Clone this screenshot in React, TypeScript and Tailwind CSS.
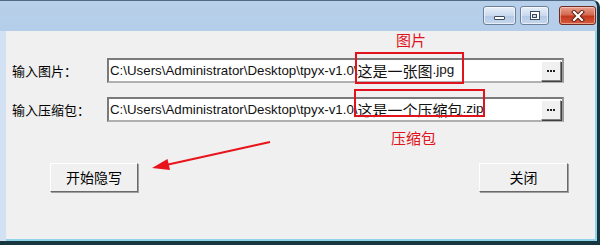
import React from "react";

const latin = { fontFamily: '"Liberation Sans", Arial, sans-serif' };
const cjk = { fontFamily: '"Noto Sans CJK SC", "Liberation Sans", sans-serif' };

function DotsButton() {
  return (
    <div className="mr-[1px] flex h-[20px] w-[20px] items-center justify-center gap-[1px] border border-t-white border-l-white border-r-[#808080] border-b-[#808080] bg-[#f0f0f0] shadow-[1px_1px_0_#404040]">
      <span className="h-[2px] w-[2px] bg-[#202020]" />
      <span className="h-[2px] w-[2px] bg-[#202020]" />
      <span className="h-[2px] w-[2px] bg-[#202020]" />
    </div>
  );
}

function Field({ prefix, name, ext }: { prefix: string; name: string; ext: string }) {
  return (
    <div className="flex h-[25px] w-[457px] items-center justify-between border-2 border-t-[#7a7a7a] border-l-[#7a7a7a] border-r-[#9a9a9a] border-b-[#b0b0b0] bg-white">
      <div className="flex items-center whitespace-nowrap pl-[1px] text-[#111]">
        <span className="text-[13.3px]" style={latin}>{prefix}</span>
        <span className="text-[15px] leading-[18px]" style={cjk}>{name}</span>
        <span className="text-[13.5px]" style={latin}>{ext}</span>
      </div>
      <DotsButton />
    </div>
  );
}

function ClassicButton({ label, w }: { label: string; w: string }) {
  return (
    <div
      className={`${w} flex h-[29px] items-center justify-center border border-t-white border-l-white border-r-[#6a6a6a] border-b-[#6a6a6a] bg-[#f0f0f0] text-[14px] text-black shadow-[1px_1px_0_#a0a0a0]`}
      style={cjk}
    >
      {label}
    </div>
  );
}

export default function App() {
  return (
    <div className="relative h-[245px] w-[600px] overflow-hidden bg-white">
      <div className="flex h-full flex-col overflow-hidden rounded-tr-[7px] border-t border-r-[3px] border-b-[4px] border-t-[#4f6b88] border-r-[#17363f] border-b-[#17363f] bg-[linear-gradient(to_bottom,#b8d0ea,#a2c1e3_60%,#a9c7e6_85%,#c6daef)]">
        {/* title bar */}
        <div className="flex h-[30px] shrink-0 items-start justify-end pr-[1px] pt-[5px]">
          <div className="flex h-[19px] w-[33px] items-center justify-center rounded-[3px] border border-[#6d809a] bg-[linear-gradient(to_bottom,#e9f0f9,#c9d9ee_50%,#b2c8e4_51%,#c6d8ee)] shadow-[inset_0_0_0_1px_rgba(255,255,255,0.6)]">
            <div className="mt-[5px] h-[4px] w-[11px] rounded-[1px] border border-[#3b4a5e] bg-white" />
          </div>
          <div className="ml-[4px] flex h-[19px] w-[29px] items-center justify-center rounded-[3px] border border-[#6d809a] bg-[linear-gradient(to_bottom,#e9f0f9,#c9d9ee_50%,#b2c8e4_51%,#c6d8ee)] shadow-[inset_0_0_0_1px_rgba(255,255,255,0.6)]">
            <div className="flex h-[9px] w-[10px] items-center justify-center border border-[#3b4a5e] bg-white">
              <div className="h-[4px] w-[5px] border border-[#3b4a5e] bg-[#c9d9ee]" />
            </div>
          </div>
          <div className="ml-[10px] flex h-[19px] w-[37px] items-center justify-center rounded-[3px] border border-[#6e2a20] bg-[linear-gradient(to_bottom,#e8a08f,#d56a52_45%,#c2381d_55%,#d65c3c)] shadow-[inset_0_0_0_1px_rgba(255,230,220,0.5)]">
            <svg width="14" height="12" viewBox="0 0 14 12">
              <path d="M3 2 L11 10 M11 2 L3 10" stroke="#5a1a10" strokeWidth="4" strokeLinecap="square" />
              <path d="M3 2 L11 10 M11 2 L3 10" stroke="#ffffff" strokeWidth="2.2" strokeLinecap="square" />
            </svg>
          </div>
        </div>
        {/* frame + client */}
        <div className="flex flex-1 bg-[#d3e2f3] pl-[6px]">
          <div className="flex flex-1 flex-col border-r-2 border-b-2 border-r-[#8fd3e8] border-b-[#8fd3e8] bg-[#f0f0f0] pt-[27px]" style={cjk}>
            <div className="flex h-[25px] items-center pl-[6px]">
              <span className="w-[95px] text-[13px] text-black">输入图片：</span>
              <Field prefix="C:\Users\Administrator\Desktop\tpyx-v1.0\" name="这是一张图" ext=".jpg" />
            </div>
            <div className="mt-[14px] flex h-[25px] items-center pl-[6px]">
              <span className="w-[95px] text-[13px] text-black">输入压缩包：</span>
              <Field prefix="C:\Users\Administrator\Desktop\tpyx-v1.0\" name="这是一个压缩包" ext=".zip" />
            </div>
            <div className="mt-[41px] flex justify-between pl-[44px] pr-[27px]">
              <ClassicButton label="开始隐写" w="w-[88px]" />
              <ClassicButton label="关闭" w="w-[89px]" />
            </div>
          </div>
        </div>
      </div>

      {/* annotations */}
      <div className="absolute left-[355px] top-[52px] h-[32px] w-[109px] border-2 border-[#e0141c]" />
      <div className="absolute left-[354px] top-[89px] h-[28px] w-[131px] border-2 border-[#e0141c]" />
      <div className="absolute left-[396px] top-[31px] text-[15px] leading-[18px] text-[#e0141c]" style={cjk}>图片</div>
      <div className="absolute left-[391px] top-[129px] text-[15px] leading-[18px] text-[#e0141c]" style={cjk}>压缩包</div>
      <svg className="absolute left-0 top-0" width="600" height="245" viewBox="0 0 600 245">
        <line x1="270" y1="142" x2="166" y2="165" stroke="#e8141c" strokeWidth="2" />
        <polygon points="152,168 170,170 167.5,159" fill="#e8141c" />
      </svg>
    </div>
  );
}
